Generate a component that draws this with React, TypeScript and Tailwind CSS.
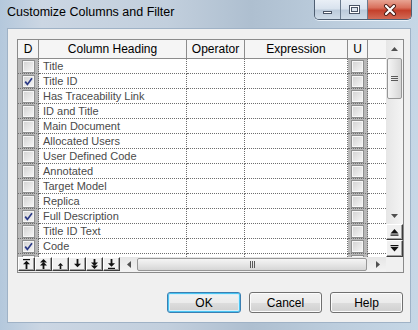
import React from "react";

const rows = [
  { name: "Title", d: false },
  { name: "Title ID", d: true },
  { name: "Has Traceability Link", d: false },
  { name: "ID and Title", d: false },
  { name: "Main Document", d: false },
  { name: "Allocated Users", d: false },
  { name: "User Defined Code", d: false },
  { name: "Annotated", d: false },
  { name: "Target Model", d: false },
  { name: "Replica", d: false },
  { name: "Full Description", d: true },
  { name: "Title ID Text", d: false },
  { name: "Code", d: true },
  { name: "", d: false },
];

const cols = "grid grid-cols-[21px_148px_58px_103px_20px_18px]";

function Check({ on }: { on?: boolean }) {
  return (
    <div className="w-[13px] h-[13px] border border-[#8e8f8f] bg-[linear-gradient(135deg,#d2d2d2,#f7f7f7)] shadow-[inset_0_0_0_1px_#f6f6f6] flex items-center justify-center">
      {on && (
        <svg width="9" height="9" viewBox="0 0 9 9">
          <path d="M1.2 4.6 L3.4 7.4 L8 1.2" fill="none" stroke="#2b3a86" strokeWidth="1.7" />
        </svg>
      )}
    </div>
  );
}

function ToolIcon({ kind }: { kind: number }) {
  const up = (y: number) => `M4.5 ${y} L1 ${y + 3.5} L8 ${y + 3.5} Z`;
  const down = (y: number) => `M4.5 ${y + 3.5} L1 ${y} L8 ${y} Z`;
  return (
    <svg width="9" height="10" viewBox="0 0 9 10" fill="#111">
      {kind === 0 && (
        <>
          <rect x="1" y="0" width="7" height="1.2" />
          <path d={up(1.8)} />
          <rect x="3.6" y="5" width="1.8" height="5" />
        </>
      )}
      {kind === 1 && (
        <>
          <path d={up(0)} />
          <path d={up(3)} />
          <rect x="3.6" y="6" width="1.8" height="4" />
        </>
      )}
      {kind === 2 && (
        <>
          <path d="M4.5 4 L1.8 6.8 L7.2 6.8 Z" />
          <rect x="3.7" y="6.5" width="1.6" height="3.5" />
        </>
      )}
      {kind === 3 && (
        <>
          <rect x="3.6" y="0" width="1.8" height="5" />
          <path d={down(4.8)} />
        </>
      )}
      {kind === 4 && (
        <>
          <rect x="3.6" y="0" width="1.8" height="4" />
          <path d={down(3.5)} />
          <path d={down(6.5)} />
        </>
      )}
      {kind === 5 && (
        <>
          <rect x="3.6" y="0" width="1.8" height="5" />
          <path d={down(4.2)} />
          <rect x="1" y="8.8" width="7" height="1.2" />
        </>
      )}
    </svg>
  );
}

function RaisedBtn({ children, w, h }: { children: React.ReactNode; w: string; h: string }) {
  return (
    <div
      className={`${w} ${h} bg-[#f0f0f0] border border-t-white border-l-white border-r-[#3c3c3c] border-b-[#3c3c3c] shadow-[inset_-1px_-1px_0_#a0a0a0] flex items-center justify-center`}
    >
      {children}
    </div>
  );
}

function DialogButton({ label, focused }: { label: string; focused?: boolean }) {
  return (
    <div
      className={
        focused
          ? "w-[74px] h-[21px] rounded-[3px] border border-[#3c7fb1] bg-[linear-gradient(#f2f2f2_0%,#ebebeb_50%,#dddddd_51%,#cfcfcf_100%)] shadow-[inset_0_0_0_1px_#48c4f2,inset_0_0_0_2px_#d6eef9] flex items-center justify-center text-[12px] text-black"
          : "w-[73px] h-[21px] rounded-[3px] border border-[#707070] bg-[linear-gradient(#f2f2f2_0%,#ebebeb_50%,#dddddd_51%,#cfcfcf_100%)] shadow-[inset_0_0_0_1px_#fbfbfb] flex items-center justify-center text-[12px] text-black"
      }
    >
      {label}
    </div>
  );
}

export default function App() {
  return (
    <div className="w-[418px] h-[330px] overflow-hidden font-['Liberation_Sans',Arial,sans-serif] bg-[linear-gradient(90deg,#b4c8dc_0%,#cbd6e3_10%,#c2cfdd_40%,#aebfd0_60%,#bccddd_80%,#c6d7e6_100%)]">
      {/* title bar */}
      <div className="h-[28px] flex items-start justify-between">
        <div className="pl-[7px] pt-[5px] text-[12.5px] text-black leading-[14px]">
          Customize Columns and Filter
        </div>
        <div className="flex mr-[6px] rounded-b-[5px] border border-t-0 border-[#4f5f72] overflow-hidden shadow-[0_1px_0_#e8f0f8]">
          <div className="w-[26px] h-[19px] border-r border-[#6a7b8e] bg-[linear-gradient(#e9eff6_0%,#d9e3ee_45%,#bccbdb_55%,#cfdce8_100%)] flex items-end justify-center pb-[5px]">
            <div className="w-[9px] h-[3px] bg-white border border-[#4a5566]" />
          </div>
          <div className="w-[27px] h-[19px] border-r border-[#6a7b8e] bg-[linear-gradient(#e9eff6_0%,#d9e3ee_45%,#bccbdb_55%,#cfdce8_100%)] flex items-center justify-center">
            <div className="w-[11px] h-[9px] border border-[#4a5566] bg-white flex items-center justify-center">
              <div className="w-[7px] h-[5px] border border-[#4a5566] bg-[#dbe4ee]" />
            </div>
          </div>
          <div className="w-[43px] h-[19px] bg-[linear-gradient(#e8a493_0%,#d9715d_40%,#c4402b_55%,#d26a55_100%)] flex items-center justify-center">
            <svg width="14" height="12" viewBox="0 0 14 12">
              <path d="M3 2 L11 10 M11 2 L3 10" stroke="#4a1d16" strokeWidth="4" strokeLinecap="round" />
              <path d="M3 2 L11 10 M11 2 L3 10" stroke="#ffffff" strokeWidth="2.2" strokeLinecap="round" />
            </svg>
          </div>
        </div>
      </div>

      {/* client area */}
      <div className="mx-[7px] h-[295px] bg-[#f0f0f0] border border-[#9fb2c6]">
        <div className="ml-[9px] mt-[10px] w-[387px] h-[234px] border border-[#8a8a8a] bg-white flex">
          {/* main grid */}
          <div className="w-[368px] flex flex-col">
            <div className={`${cols} h-[19px] border-b border-[#8c8c8c] bg-[#f5f5f5] text-[12px] text-black`}>
              {["D", "Column Heading", "Operator", "Expression", "U", ""].map((h, i) => (
                <div key={i} className={`flex items-center justify-center ${i < 5 ? "border-r border-[#8c8c8c]" : ""}`}>
                  {h}
                </div>
              ))}
            </div>
            <div className="h-[198px] overflow-hidden">
              {rows.map((r, idx) => (
                <div key={idx} className={`${cols} h-[15px] text-[11px] text-[#4a4a4a]`}>
                  <div className="bg-[#b8b8b8] border-r border-b border-dotted border-[#6e6e6e] flex items-center justify-center">
                    <Check on={r.d} />
                  </div>
                  <div className="border-r border-b border-dotted border-[#6e6e6e] pl-[4px] flex items-center leading-none">
                    {r.name}
                  </div>
                  <div className="border-r border-b border-dotted border-[#6e6e6e]" />
                  <div className="border-r border-b border-dotted border-[#6e6e6e]" />
                  <div className="bg-[#b8b8b8] border-r border-b border-dotted border-[#6e6e6e] flex items-center justify-center">
                    <Check />
                  </div>
                  <div className="border-b border-dotted border-[#6e6e6e]" />
                </div>
              ))}
            </div>
            {/* toolbar + horizontal scrollbar */}
            <div className="h-[15px] flex bg-[#f0f0f0]">
              {[0, 1, 2, 3, 4, 5].map((k) => (
                <RaisedBtn key={k} w="w-[17px]" h="h-[14px]">
                  <ToolIcon kind={k} />
                </RaisedBtn>
              ))}
              <div className="flex-1 flex bg-[linear-gradient(#e6e6e6,#f3f3f3)]">
                <div className="w-[17px] flex items-center justify-center">
                  <svg width="4" height="7" viewBox="0 0 4 7">
                    <path d="M4 0 L0 3.5 L4 7 Z" fill="#505050" />
                  </svg>
                </div>
                <div className="flex-1 pr-[2px] py-[1px]">
                  <div className="h-full rounded-[2px] border border-[#979797] bg-[linear-gradient(#f5f5f5,#e6e6e6_50%,#d6d6d6)] flex items-center justify-center">
                    <div className="flex gap-[1px]">
                      <div className="w-[1px] h-[7px] bg-[#5a5a5a]" />
                      <div className="w-[1px] h-[7px] bg-[#5a5a5a]" />
                      <div className="w-[1px] h-[7px] bg-[#5a5a5a]" />
                    </div>
                  </div>
                </div>
                <div className="w-[17px] flex items-center justify-center">
                  <svg width="4" height="7" viewBox="0 0 4 7">
                    <path d="M0 0 L4 3.5 L0 7 Z" fill="#505050" />
                  </svg>
                </div>
              </div>
            </div>
          </div>

          {/* vertical scrollbar */}
          <div className="w-[17px] flex flex-col bg-[#f0f0f0]">
            <div className="flex-1 flex flex-col bg-[linear-gradient(90deg,#e6e6e6,#f4f4f4)]">
              <div className="h-[17px] flex items-center justify-center">
                <svg width="7" height="4" viewBox="0 0 7 4">
                  <path d="M0 4 L3.5 0 L7 4 Z" fill="#505050" />
                </svg>
              </div>
              <div className="flex-1 px-[1px] pt-[1px]">
                <div className="h-[41px] rounded-[2px] border border-[#979797] bg-[linear-gradient(90deg,#f5f5f5,#e6e6e6_50%,#d6d6d6)] flex items-center justify-center">
                  <div className="flex flex-col gap-[1px]">
                    <div className="w-[7px] h-[1px] bg-[#5a5a5a]" />
                    <div className="w-[7px] h-[1px] bg-[#5a5a5a]" />
                    <div className="w-[7px] h-[1px] bg-[#5a5a5a]" />
                  </div>
                </div>
              </div>
              <div className="h-[17px] flex items-center justify-center">
                <svg width="7" height="4" viewBox="0 0 7 4">
                  <path d="M0 0 L3.5 4 L7 0 Z" fill="#505050" />
                </svg>
              </div>
            </div>
            <RaisedBtn w="w-[17px]" h="h-[16px]">
              <svg width="9" height="7" viewBox="0 0 9 7" fill="#111">
                <path d="M4.5 0 L0.5 4.5 L8.5 4.5 Z" />
                <rect x="0.5" y="5.5" width="8" height="1.2" />
              </svg>
            </RaisedBtn>
            <RaisedBtn w="w-[17px]" h="h-[17px]">
              <svg width="9" height="7" viewBox="0 0 9 7" fill="#111">
                <rect x="0.5" y="0" width="8" height="1.2" />
                <path d="M4.5 6.5 L0.5 2 L8.5 2 Z" />
              </svg>
            </RaisedBtn>
            <div className="h-[15px]" />
          </div>
        </div>

        {/* dialog buttons */}
        <div className="mt-[19px] pr-[7px] flex justify-end gap-[8px]">
          <DialogButton label="OK" focused />
          <DialogButton label="Cancel" />
          <DialogButton label="Help" />
        </div>
      </div>
    </div>
  );
}
